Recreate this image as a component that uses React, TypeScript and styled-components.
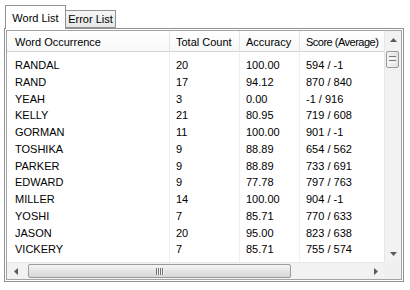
import styled, { createGlobalStyle } from "styled-components";

const GlobalStyle = createGlobalStyle`
  html, body {
    margin: 0;
    padding: 0;
    background: #ffffff;
  }
  body {
    font-family: "Liberation Sans", Arial, sans-serif;
    font-size: 11px;
    color: #000000;
  }
`;

const Page = styled.div`
  width: 410px;
  height: 290px;
  padding: 5px 0 0 4px;
  box-sizing: border-box;
`;

const TabRow = styled.div`
  display: flex;
  align-items: flex-end;
  height: 23px;
  padding-left: 1px;
`;

const Tab = styled.div<{ $active?: boolean }>`
  position: relative;
  z-index: ${(p) => (p.$active ? 2 : 1)};
  box-sizing: border-box;
  display: flex;
  align-items: center;
  justify-content: center;
  width: ${(p) => (p.$active ? "61px" : "50px")};
  height: ${(p) => (p.$active ? "24px" : "18px")};
  margin-bottom: ${(p) => (p.$active ? "-1px" : "0")};
  border: 1px solid #919191;
  border-bottom: ${(p) => (p.$active ? "none" : "1px solid #919191")};
  border-left: ${(p) => (p.$active ? "1px solid #919191" : "none")};
  background: ${(p) =>
    p.$active ? "#ffffff" : "linear-gradient(#f6f6f6, #e6e6e6)"};
  padding-top: ${(p) => (p.$active ? "1px" : "0")};
`;

const Panel = styled.div`
  box-sizing: border-box;
  width: 400px;
  height: 254px;
  border: 1px solid #919191;
  padding: 1px;
  background: #ffffff;
`;

const ListView = styled.div`
  box-sizing: border-box;
  width: 100%;
  height: 100%;
  border: 1px solid #a3a3a3;
  display: grid;
  grid-template-columns: 1fr 17px;
  grid-template-rows: 1fr 17px;
  overflow: hidden;
`;

const Table = styled.div`
  display: flex;
  overflow: hidden;
  background: #ffffff;
`;

const Column = styled.div<{ $width?: number }>`
  display: flex;
  flex-direction: column;
  flex: ${(p) => (p.$width ? `0 0 ${p.$width}px` : "1 1 auto")};
  min-width: 0;
`;

const HeadCell = styled.div<{ $pad: number; $last?: boolean }>`
  box-sizing: border-box;
  height: 21px;
  line-height: 22px;
  padding-left: ${(p) => p.$pad}px;
  background: linear-gradient(#ffffff, #f7f8f9);
  border-bottom: 1px solid #d5d5d5;
  border-right: ${(p) => (p.$last ? "none" : "1px solid #e5e5e5")};
  letter-spacing: ${(p) => (p.$last ? "-0.5px" : "0")};
  white-space: nowrap;
  overflow: hidden;
`;

const ColBody = styled.div<{ $last?: boolean }>`
  flex: 1;
  padding-top: 4px;
  border-right: ${(p) => (p.$last ? "none" : "1px solid #eff0f2")};
`;

const Cell = styled.div<{ $pad: number }>`
  height: 16.75px;
  line-height: 18px;
  padding-left: ${(p) => p.$pad}px;
  white-space: nowrap;
  overflow: hidden;
`;

const VScroll = styled.div`
  display: flex;
  flex-direction: column;
  background: #f2f2f2;
  border-left: 1px solid #e6e6e6;
`;

const HScroll = styled.div`
  display: flex;
  background: #f2f2f2;
  border-top: 1px solid #e6e6e6;
`;

const Corner = styled.div`
  background: #f0f0f0;
`;

const ArrowBtn = styled.div`
  flex: 0 0 17px;
  display: flex;
  align-items: center;
  justify-content: center;
`;

const Track = styled.div<{ $vertical?: boolean }>`
  flex: 1;
  display: flex;
  flex-direction: ${(p) => (p.$vertical ? "column" : "row")};
  align-items: ${(p) => (p.$vertical ? "center" : "stretch")};
`;

const Thumb = styled.div<{ $vertical?: boolean }>`
  box-sizing: border-box;
  display: flex;
  align-items: center;
  justify-content: center;
  border: 1px solid #9a9a9a;
  border-radius: 2px;
  ${(p) =>
    p.$vertical
      ? `
    width: 13px;
    height: 17px;
    margin-top: 3px;
    margin-left: -2px;
    background: linear-gradient(90deg, #f4f4f4, #e2e2e2);
  `
      : `
    width: 263px;
    margin: 1px 0 1px 4px;
    background: linear-gradient(#f6f6f6, #e4e4e4 50%, #d6d6d6);
  `}
`;

type Dir = "up" | "down" | "left" | "right";

const Arrow = ({ dir }: { dir: Dir }) => {
  const pts: Record<Dir, string> = {
    up: "0,4 3.5,0 7,4",
    down: "0,0 7,0 3.5,4",
    left: "4,0 4,7 0,3.5",
    right: "0,0 4,3.5 0,7",
  };
  const vert = dir === "up" || dir === "down";
  return (
    <svg width={vert ? 7 : 4} height={vert ? 4 : 7}>
      <polygon points={pts[dir]} fill="#5a5a5a" />
    </svg>
  );
};

const Grip = ({ vertical }: { vertical?: boolean }) =>
  vertical ? (
    <svg width="7" height="7">
      {[0, 2, 4, 6].map((y) => (
        <rect key={y} x="0" y={y} width="7" height="1" fill={y % 4 === 0 ? "#7a7a7a" : "#ffffff"} />
      ))}
    </svg>
  ) : (
    <svg width="8" height="7">
      {[0, 1, 2, 3, 4, 5, 6, 7].map((x) => (
        <rect key={x} x={x} y="0" width="1" height="7" fill={x % 2 === 0 ? "#6e6e6e" : "#f5f5f5"} />
      ))}
    </svg>
  );

const rows: [string, string, string, string][] = [
  ["RANDAL", "20", "100.00", "594 / -1"],
  ["RAND", "17", "94.12", "870 / 840"],
  ["YEAH", "3", "0.00", "-1 / 916"],
  ["KELLY", "21", "80.95", "719 / 608"],
  ["GORMAN", "11", "100.00", "901 / -1"],
  ["TOSHIKA", "9", "88.89", "654 / 562"],
  ["PARKER", "9", "88.89", "733 / 691"],
  ["EDWARD", "9", "77.78", "797 / 763"],
  ["MILLER", "14", "100.00", "904 / -1"],
  ["YOSHI", "7", "85.71", "770 / 633"],
  ["JASON", "20", "95.00", "823 / 638"],
  ["VICKERY", "7", "85.71", "755 / 574"],
];

const columns = [
  { title: "Word Occurrence", width: 163, pad: 8 },
  { title: "Total Count", width: 70, pad: 6 },
  { title: "Accuracy", width: 60, pad: 6 },
  { title: "Score (Average)", width: 0, pad: 6 },
];

export default function App() {
  return (
    <>
      <GlobalStyle />
      <Page>
        <TabRow>
          <Tab $active>Word List</Tab>
          <Tab>Error List</Tab>
        </TabRow>
        <Panel>
          <ListView>
            <Table>
              {columns.map((col, ci) => {
                const last = ci === columns.length - 1;
                return (
                  <Column key={col.title} $width={col.width || undefined}>
                    <HeadCell $pad={col.pad} $last={last}>
                      {col.title}
                    </HeadCell>
                    <ColBody $last={last}>
                      {rows.map((r, ri) => (
                        <Cell key={ri} $pad={col.pad}>
                          {r[ci]}
                        </Cell>
                      ))}
                    </ColBody>
                  </Column>
                );
              })}
            </Table>
            <VScroll>
              <ArrowBtn>
                <Arrow dir="up" />
              </ArrowBtn>
              <Track $vertical>
                <Thumb $vertical>
                  <Grip vertical />
                </Thumb>
              </Track>
              <ArrowBtn>
                <Arrow dir="down" />
              </ArrowBtn>
            </VScroll>
            <HScroll>
              <ArrowBtn>
                <Arrow dir="left" />
              </ArrowBtn>
              <Track>
                <Thumb>
                  <Grip />
                </Thumb>
              </Track>
              <ArrowBtn>
                <Arrow dir="right" />
              </ArrowBtn>
            </HScroll>
            <Corner />
          </ListView>
        </Panel>
      </Page>
    </>
  );
}
